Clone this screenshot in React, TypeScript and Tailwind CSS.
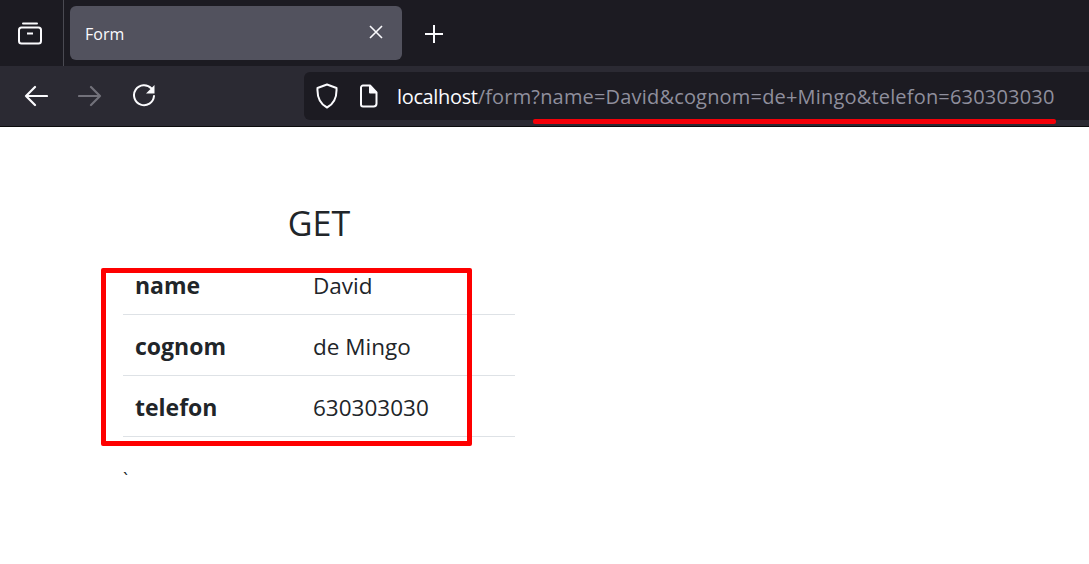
const font = { fontFamily: '"Open Sans", "Noto Sans", sans-serif' };

const Row = ({ k, v }: { k: string; v: string }) => (
  <div className="flex h-[61px] items-center border-b border-[#dee2e6] pl-3 pt-[3px]">
    <div className="w-[178px] text-[23px] font-bold text-[#212529]">{k}</div>
    <div className="text-[22.5px] text-[#212529]">{v}</div>
  </div>
);

export default function App() {
  return (
    <div className="relative h-[564px] w-[1089px] overflow-hidden bg-white" style={font}>
      <div className="flex h-[66px] items-stretch bg-[#1c1b22]">
        <div className="flex w-[64px] items-center justify-center border-r border-[#4a4a52]">
          <svg width="26" height="26" viewBox="0 0 26 26" fill="none" stroke="#fbfbfe" strokeWidth="2" className="mr-[4px] mb-[1px]">
            <path d="M6 3.500h14" strokeLinecap="round" />
            <rect x="2" y="7.500" width="22" height="16" rx="2.500" />
            <path d="M10 13.500h6" />
          </svg>
        </div>
        <div className="ml-[6px] mt-[6px] flex h-[54px] w-[332px] items-center justify-between rounded-[6px] bg-[#52525e] pl-[15px] pr-[19px]">
          <span className="mt-[1px] text-[16px] text-[#fbfbfe]">Form</span>
          <svg width="14" height="14" viewBox="0 0 14 14" stroke="#fbfbfe" strokeWidth="1.600" className="mb-[2px]">
            <path d="M1 1l12 12M13 1L1 13" />
          </svg>
        </div>
        <div className="ml-[23px] mt-[1px] flex items-center">
          <svg width="18" height="18" viewBox="0 0 18 18" stroke="#fbfbfe" strokeWidth="2">
            <path d="M9 0v18M0 9h18" />
          </svg>
        </div>
      </div>
      <div className="flex h-[61px] items-center border-b border-[#0c0c0d] bg-[#2b2a33]">
        <svg width="24" height="22" viewBox="0 0 24 22" fill="none" stroke="#fbfbfe" strokeWidth="2.200" strokeLinecap="round" strokeLinejoin="round" className="ml-[24px]">
          <path d="M23 11H2M11 2l-9 9 9 9" />
        </svg>
        <svg width="24" height="22" viewBox="0 0 24 22" fill="none" stroke="#72717a" strokeWidth="2.200" strokeLinecap="round" strokeLinejoin="round" className="ml-[30px]">
          <path d="M1 11h21M13 2l9 9-9 9" />
        </svg>
        <svg width="24" height="24" viewBox="0 0 24 24" fill="none" className="ml-[30px] mb-[3px]">
          <path d="M19.500 5.500A10 10 0 1 0 22 13" stroke="#fbfbfe" strokeWidth="2" strokeLinecap="round" />
          <path d="M22.500 2v8.500h-8.500z" fill="#fbfbfe" />
        </svg>
        <div className="ml-[148px] flex h-[48px] flex-1 items-center rounded-l-[6px] bg-[#1c1b22] pl-[12px]">
          <svg width="22" height="26" viewBox="0 0 22 26" fill="none" stroke="#fbfbfe" strokeWidth="2" strokeLinejoin="round">
            <path d="M11 1.500l9.500 3.500c.5 9-2 15.500-9.500 19.500C3.500 20.500 1 14 1.500 5z" />
          </svg>
          <svg width="18" height="24" viewBox="0 0 18 24" fill="none" stroke="#fbfbfe" strokeWidth="2" strokeLinejoin="round" className="ml-[22px]">
            <path d="M3 1.500h7l6.500 7v11a3 3 0 0 1-3 3h-10.500a2 2 0 0 1-2-2v-17a2 2 0 0 1 2-2z" />
            <path d="M10 1.500v7h6.500" fill="#fbfbfe" />
          </svg>
          <div className="ml-[19px] mt-[2px] whitespace-nowrap text-[20px] tracking-[0.18px] text-[#8f8f9d]">
            <span className="tracking-[-0.35px] text-[#fbfbfe]">localhost</span>/form?name=David&amp;cognom=de+Mingo&amp;telefon=630303030
          </div>
        </div>
      </div>

      <div className="ml-[123px] w-[392px] pt-[72px]">
        <h2 className="text-center text-[34px] leading-[48px] text-[#212529]">GET</h2>
        <div className="mt-[7px]">
          <Row k="name" v="David" />
          <Row k="cognom" v="de Mingo" />
          <Row k="telefon" v="630303030" />
        </div>
        <div className="mt-[30px] text-[18px] leading-[24px] text-[#212529]">`</div>
      </div>

      <div className="absolute left-[533px] top-[119px] h-[5px] w-[523px] rounded-[2px] bg-[#f40008]" />
      <div className="absolute left-[101px] top-[268px] h-[178px] w-[371px] rounded-[2px] border-[5px] border-[#fe0000]" />
    </div>
  );
}
